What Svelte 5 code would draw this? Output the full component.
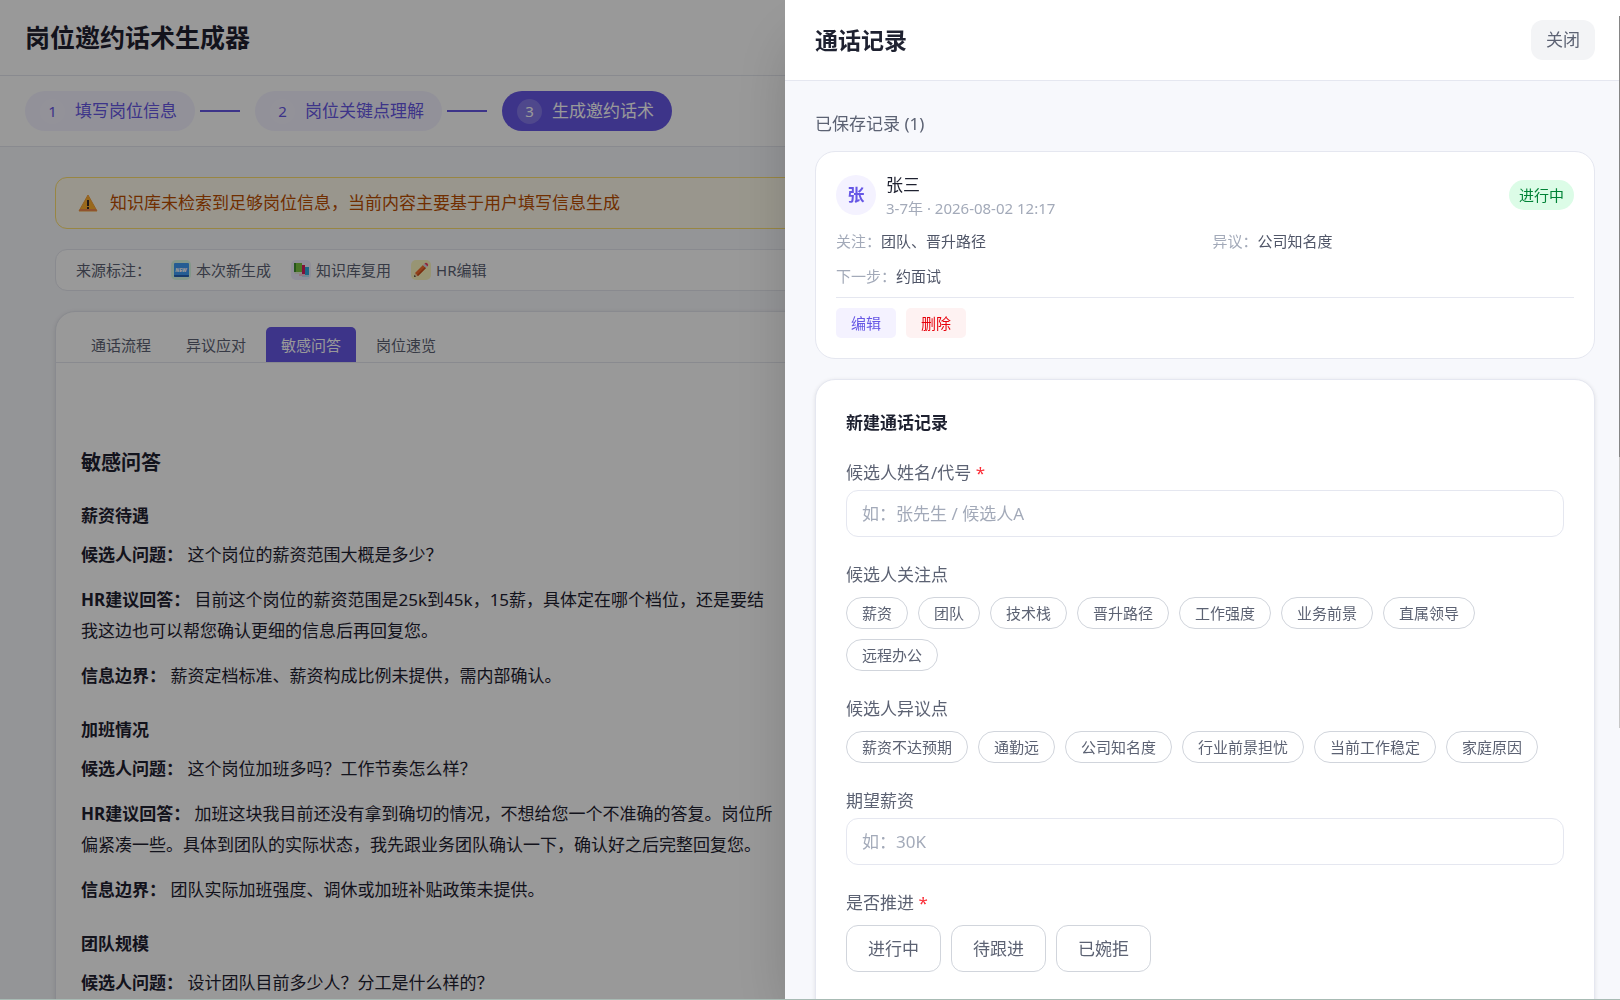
<script>
  const steps = ['填写岗位信息', '岗位关键点理解', '生成邀约话术'];
  const tabs = ['通话流程', '异议应对', '敏感问答', '岗位速览'];
  const focusOptions = ['薪资', '团队', '技术栈', '晋升路径', '工作强度', '业务前景', '直属领导', '远程办公'];
  const objectionOptions = ['薪资不达预期', '通勤远', '公司知名度', '行业前景担忧', '当前工作稳定', '家庭原因'];
  const statusOptions = ['进行中', '待跟进', '已婉拒'];

  const questions = [
    {
      title: '薪资待遇',
      question: '这个岗位的薪资范围大概是多少？',
      answer: [
        '目前这个岗位的薪资范围是25k到45k，15薪，具体定在哪个档位，还是要结',
        '我这边也可以帮您确认更细的信息后再回复您。'
      ],
      boundary: '薪资定档标准、薪资构成比例未提供，需内部确认。'
    },
    {
      title: '加班情况',
      question: '这个岗位加班多吗？工作节奏怎么样？',
      answer: [
        '加班这块我目前还没有拿到确切的情况，不想给您一个不准确的答复。岗位所',
        '偏紧凑一些。具体到团队的实际状态，我先跟业务团队确认一下，确认好之后完整回复您。'
      ],
      boundary: '团队实际加班强度、调休或加班补贴政策未提供。'
    },
    {
      title: '团队规模',
      question: '设计团队目前多少人？分工是什么样的？'
    }
  ];

  let currentStep = $state(2);
  let activeTab = $state('敏感问答');
  let drawerOpen = $state(true);
  let records = $state([
    {
      name: '张三',
      years: '3-7年',
      time: '2026-08-02 12:17',
      status: '进行中',
      focus: '团队、晋升路径',
      objection: '公司知名度',
      next: '约面试'
    }
  ]);

  let name = $state('');
  let salary = $state('');
  let status = $state('');
  let focus = $state([]);
  let objections = $state([]);

  function toggle(list, item) {
    return list.includes(item) ? list.filter((i) => i !== item) : [...list, item];
  }

  function editRecord(record) {
    name = record.name;
    status = record.status;
    focus = record.focus.split('、');
    objections = record.objection.split('、');
  }

  function removeRecord(index) {
    records = records.filter((_, i) => i !== index);
  }
</script>

<div class="app">
  <header class="topbar">
    <h1>岗位邀约话术生成器</h1>
  </header>

  <nav class="steps">
    {#each steps as step, i}
      {#if i > 0}
        <span class="connector"></span>
      {/if}
      <button class="step" class:active={currentStep === i} onclick={() => (currentStep = i)}>
        <span class="num">{i + 1}</span>
        {step}
      </button>
    {/each}
  </nav>

  <main class="page">
    <div class="warning">
      <svg width="24" height="20" viewBox="0 0 24 20" aria-hidden="true">
        <path d="M12 2 L21 18 H3 Z" fill="#ffb02e" stroke="#f5a03a" stroke-linejoin="round" />
        <path d="M4 16 H20 L21 18 H3 Z" fill="#f08a4b" />
        <path d="M11 7 H13 V13 H11 Z M11 14 H13 V16 H11 Z" fill="#3a2a2a" />
      </svg>
      知识库未检索到足够岗位信息，当前内容主要基于用户填写信息生成
    </div>

    <div class="sources">
      <span>来源标注：</span>
      <span class="source">
        <i class="badge new">
          <svg width="16" height="16" viewBox="0 0 16 16">
            <rect x="1" y="1" width="15" height="14" rx="1" fill="#3d9bf5" />
            <path d="M1 13 H16 V14 Q16 15 15 15 H2 Q1 15 1 14 Z" fill="#2563b8" />
            <text x="8" y="10" text-anchor="middle" font-size="5" font-weight="900" fill="#fff">NEW</text>
          </svg>
        </i>
        本次新生成
      </span>
      <span class="source">
        <i class="badge kb">
          <svg width="16" height="16" viewBox="0 0 16 16">
            <path d="M9 5 L16 5 V14 H9 Z" fill="#2ea8e0" />
            <path d="M9 13 H16 V15 H9 Z" fill="#b9e3f7" />
            <path d="M6 3 H12 V12 H6 Z" fill="#d81b60" />
            <path d="M6 12 H12 V14 H6 Z" fill="#f3c3d4" />
            <path d="M1 1 H9 V10 H1 Z" fill="#7cc444" />
            <path d="M1 1 H3 V10 H1 Z" fill="#3e8e2f" />
            <path d="M1 10 H9 V12 H2 Z" fill="#e3ecd8" />
          </svg>
        </i>
        知识库复用
      </span>
      <span class="source">
        <i class="badge hr">
          <svg width="16" height="16" viewBox="0 0 16 16">
            <path d="M1 15 L2 11 L5 14 Z" fill="#f7d2a0" />
            <path d="M1 15 L1.5 13 L3 14.5 Z" fill="#333" />
            <path d="M2 11 L10 3 L13 6 L5 14 Z" fill="#f46d2c" />
            <path d="M4 13 L12 5 L13 6 L5 14 Z" fill="#c94f1c" />
            <path d="M10 3 L11.5 1.5 L14.5 4.5 L13 6 Z" fill="#d5d9e4" />
            <path d="M11.5 1.5 Q13 0 14.5 1.5 Q16 3 14.5 4.5 Z" fill="#f0406a" />
          </svg>
        </i>
        HR编辑
      </span>
    </div>

    <section class="card">
      <div class="tabs">
        {#each tabs as tab}
          <button class="tab" class:active={activeTab === tab} onclick={() => (activeTab = tab)}>{tab}</button>
        {/each}
      </div>
      <article>
        <h2>{activeTab}</h2>
        {#each questions as item}
          <h3>{item.title}</h3>
          <p><strong>候选人问题：</strong> {item.question}</p>
          {#if item.answer}
            <p>
              <strong>HR建议回答：</strong>
              {#each item.answer as line, i}
                {#if i > 0}<br />{/if}
                <span>{line}</span>
              {/each}
            </p>
            <p><strong>信息边界：</strong> {item.boundary}</p>
          {/if}
        {/each}
      </article>
    </section>
  </main>
</div>

{#if drawerOpen}
  <div class="overlay"></div>
  <aside class="drawer">
    <header class="drawer-header">
      <h2>通话记录</h2>
      <button class="close" onclick={() => (drawerOpen = false)}>关闭</button>
    </header>

    <div class="drawer-body">
      <div class="saved-title">已保存记录 ({records.length})</div>

      {#each records as record, i}
        <section class="record">
          <div class="record-top">
            <span class="avatar">{record.name[0]}</span>
            <div class="who">
              <div class="name">{record.name}</div>
              <div class="meta">{record.years} · {record.time}</div>
            </div>
            <span class="status">{record.status}</span>
          </div>
          <div class="info">
            <div><span>关注：</span>{record.focus}</div>
            <div><span>异议：</span>{record.objection}</div>
            <div><span>下一步：</span>{record.next}</div>
          </div>
          <div class="actions">
            <button class="edit" onclick={() => editRecord(record)}>编辑</button>
            <button class="delete" onclick={() => removeRecord(i)}>删除</button>
          </div>
        </section>
      {/each}

      <form class="form" onsubmit={(e) => e.preventDefault()}>
        <h3>新建通话记录</h3>

        <div class="field">
          <label for="name">候选人姓名/代号 <em>*</em></label>
          <input id="name" type="text" placeholder="如：张先生 / 候选人A" bind:value={name} />
        </div>

        <div class="field" role="group" aria-labelledby="focus-label">
          <div class="label" id="focus-label">候选人关注点</div>
          <div class="options">
            {#each focusOptions as item}
              <button type="button" class="chip" class:selected={focus.includes(item)} onclick={() => (focus = toggle(focus, item))}>{item}</button>
            {/each}
          </div>
        </div>

        <div class="field" role="group" aria-labelledby="objection-label">
          <div class="label" id="objection-label">候选人异议点</div>
          <div class="options">
            {#each objectionOptions as item}
              <button type="button" class="chip" class:selected={objections.includes(item)} onclick={() => (objections = toggle(objections, item))}>{item}</button>
            {/each}
          </div>
        </div>

        <div class="field">
          <label for="salary">期望薪资</label>
          <input id="salary" type="text" placeholder="如：30K" bind:value={salary} />
        </div>

        <div class="field" role="group" aria-labelledby="status-label">
          <div class="label" id="status-label">是否推进 <em>*</em></div>
          <div class="options">
            {#each statusOptions as item}
              <button type="button" class="choice" class:selected={status === item} onclick={() => (status = item)}>{item}</button>
            {/each}
          </div>
        </div>
      </form>
    </div>
  </aside>
{/if}
<div class="edge-right"></div>
<div class="edge-bottom"></div>

<style>
  :global(body) {
    margin: 0;
    overflow: hidden;
    font-family: "Noto Sans", "Noto Sans CJK SC", sans-serif;
    font-size: 17px;
    line-height: 26px;
    color: #1e2130;
    background: #f7f8fc;
  }

  h1,
  h2,
  h3,
  p {
    margin: 0;
  }

  button,
  input {
    box-sizing: border-box;
    margin: 0;
    padding: 0;
    border: none;
    background: none;
    font: inherit;
    color: inherit;
  }

  button {
    cursor: pointer;
    white-space: nowrap;
  }

  .app {
    height: 100vh;
    overflow: hidden;
  }

  .topbar {
    padding: 19px 25px;
    background: #fff;
    border-bottom: 1px solid #e5e7ee;
  }

  h1 {
    font-size: 25px;
    line-height: 37px;
  }

  .steps {
    display: flex;
    align-items: center;
    padding: 15px 25px;
    background: #fff;
    border-bottom: 1px solid #e5e7ee;
  }

  .step {
    display: flex;
    align-items: center;
    gap: 10px;
    height: 40px;
    padding: 0 18px 0 15px;
    border-radius: 20px;
    background: #f4f2ff;
    color: #6657e5;
  }

  .step.active {
    background: #6657e5;
    color: #fff;
  }

  .num {
    width: 25px;
    line-height: 25px;
    border-radius: 50%;
    background: rgba(255, 255, 255, 0.2);
    font-size: 15px;
    text-align: center;
  }

  .connector {
    width: 40px;
    height: 2px;
    margin: 0 15px 0 5px;
    background: #6657e5;
  }

  .page {
    display: flex;
    flex-direction: column;
    gap: 20px;
    padding: 30px 55px;
  }

  .warning,
  .sources {
    display: flex;
    align-items: center;
    border-radius: 12px;
  }

  .warning {
    gap: 10px;
    padding: 12px 20px;
    background: #fffbeb;
    border: 1px solid #fee070;
    color: #bb4d00;
  }

  .sources {
    gap: 20px;
    padding: 10px 20px;
    background: #fff;
    border: 1px solid #e5e7ee;
    font-size: 15px;
    line-height: 20px;
    color: #5c6273;
  }

  .source {
    display: flex;
    gap: 5px;
  }

  .badge {
    display: flex;
    align-items: center;
    justify-content: center;
    width: 20px;
    height: 20px;
    border-radius: 5px;
  }

  .badge.new {
    background: #dcfce7;
  }

  .badge.kb {
    background: #f0edff;
  }

  .badge.hr {
    background: #fef9c2;
  }

  .card {
    background: #fff;
    border: 1px solid #e5e7ee;
    border-radius: 20px;
    box-shadow: 0 1px 4px rgba(0, 0, 0, 0.1);
  }

  .tabs {
    display: flex;
    gap: 5px;
    padding: 15px 20px 0;
    border-bottom: 1px solid #e5e7ee;
  }

  .tab {
    height: 35px;
    padding: 0 15px;
    border-radius: 5px 5px 0 0;
    font-size: 15px;
    color: #5c6273;
  }

  .tab.active {
    background: #6657e5;
    color: #fff;
  }

  article {
    padding: 86px 25px 25px;
  }

  article h2 {
    font-size: 20px;
    line-height: 28px;
  }

  article h3 {
    margin: 26px 0 10px;
    font-size: 17px;
  }

  article p {
    margin-bottom: 14px;
    line-height: 31px;
  }

  .overlay {
    position: fixed;
    inset: 0;
    background: rgba(0, 0, 0, 0.4);
  }

  .drawer {
    position: fixed;
    top: 0;
    right: 0;
    bottom: 0;
    width: calc(50vw + 25px);
    overflow: hidden;
    background: #f7f8fc;
    box-shadow: 0 31px 62px -15px rgba(0, 0, 0, 0.25);
  }

  .drawer-header {
    display: flex;
    align-items: center;
    justify-content: space-between;
    padding: 20px 25px 20px 30px;
    background: #fff;
    border-bottom: 1px solid #e5e7f0;
  }

  .drawer-header h2 {
    font-size: 23px;
    line-height: 40px;
  }

  .close {
    height: 40px;
    padding: 0 15px;
    border-radius: 12px;
    background: #f3f4f6;
    color: #5c6273;
  }

  .drawer-body {
    padding: 30px 25px 30px 30px;
  }

  .saved-title {
    margin-bottom: 14px;
    color: #5c6273;
  }

  .record,
  .form {
    background: #fff;
    border: 1px solid #e5e7f0;
    border-radius: 20px;
  }

  .record {
    margin-bottom: 20px;
    padding: 20px;
    font-size: 15px;
  }

  .record-top {
    display: flex;
    align-items: center;
    gap: 10px;
  }

  .avatar {
    width: 40px;
    line-height: 40px;
    border-radius: 50%;
    background: #f4f2ff;
    color: #6657e5;
    font-size: 17px;
    font-weight: 700;
    text-align: center;
  }

  .who {
    flex: 1;
  }

  .name {
    font-size: 17px;
  }

  .meta {
    line-height: 20px;
    color: #a3aab9;
  }

  .status {
    padding: 0 10px;
    border-radius: 15px;
    line-height: 30px;
    background: #dcfce7;
    color: #008236;
  }

  .info {
    display: grid;
    grid-template-columns: 1fr 1fr;
    gap: 12px 15px;
    padding: 12px 0 9px;
    border-bottom: 1px solid #e5e7f0;
    line-height: 23px;
    color: #505668;
  }

  .info span {
    color: #a3aab9;
  }

  .actions {
    display: flex;
    gap: 10px;
    padding-top: 10px;
  }

  .actions button {
    height: 30px;
    padding: 0 15px;
    border-radius: 5px;
  }

  .edit {
    background: #f4f2ff;
    color: #6657e5;
  }

  .delete {
    background: #fef2f2;
    color: #e7000b;
  }

  .form {
    padding: 30px;
    box-shadow: 0 1px 4px rgba(0, 0, 0, 0.1);
  }

  .form h3 {
    margin-bottom: 24px;
    font-size: 17px;
  }

  .field {
    margin-bottom: 25px;
    color: #5c6273;
  }

  label {
    display: block;
    margin-bottom: 4px;
  }

  .label {
    margin-bottom: 9px;
  }

  em {
    font-style: normal;
    color: #fb2c36;
  }

  input {
    display: block;
    width: 100%;
    height: 47px;
    padding: 0 15px;
    border: 1px solid #e5e7f0;
    border-radius: 12px;
    color: #1e2130;
  }

  input::placeholder {
    color: #a3aab9;
  }

  .options {
    display: flex;
    flex-wrap: wrap;
    gap: 10px;
  }

  .chip,
  .choice {
    border: 1px solid #d1d5dc;
  }

  .chip {
    height: 32px;
    padding: 0 15px;
    border-radius: 16px;
    font-size: 15px;
  }

  .choice {
    height: 47px;
    padding: 0 21px;
    border-radius: 12px;
  }

  .selected {
    border-color: #6657e5;
    background: #f4f2ff;
    color: #6657e5;
  }

  .edge-right {
    position: fixed;
    top: 16px;
    right: 0;
    width: 1px;
    height: 712px;
    background: linear-gradient(#858585 62%, #c8c8c8 62%);
  }

  .edge-bottom {
    position: fixed;
    right: 0;
    bottom: 0;
    left: 0;
    height: 1px;
    background: #a8bbb4;
  }
</style>
